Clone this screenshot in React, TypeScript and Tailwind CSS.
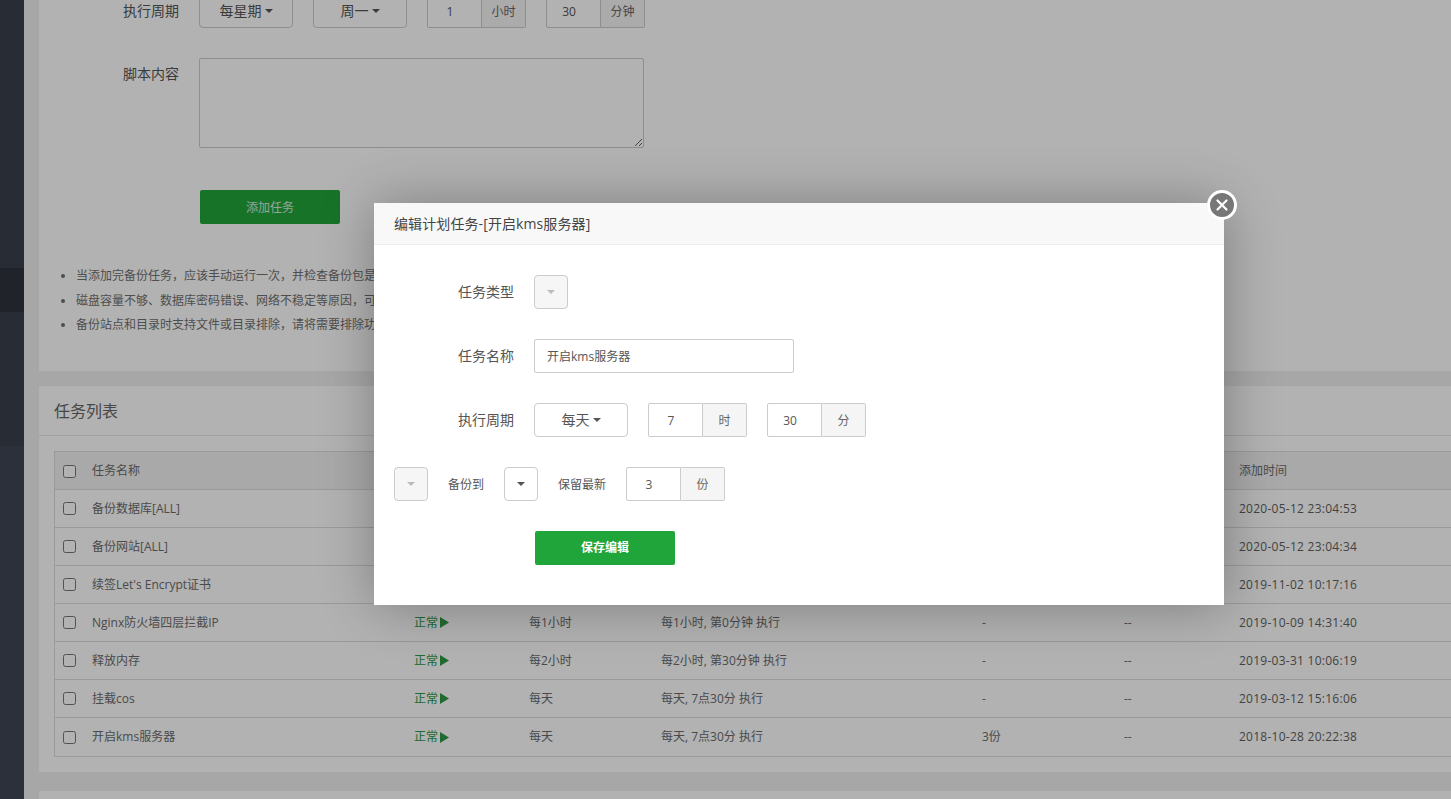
type Row = { name: string; cycle?: string; detail?: string; keep?: string; to?: string; time: string }

const rows: Row[] = [
  { name: "备份数据库[ALL]", time: "2020-05-12 23:04:53" },
  { name: "备份网站[ALL]", time: "2020-05-12 23:04:34" },
  { name: "续签Let's Encrypt证书", time: "2019-11-02 10:17:16" },
  { name: "Nginx防火墙四层拦截IP", cycle: "每1小时", detail: "每1小时, 第0分钟 执行", keep: "-", to: "--", time: "2019-10-09 14:31:40" },
  { name: "释放内存", cycle: "每2小时", detail: "每2小时, 第30分钟 执行", keep: "-", to: "--", time: "2019-03-31 10:06:19" },
  { name: "挂载cos", cycle: "每天", detail: "每天, 7点30分 执行", keep: "-", to: "--", time: "2019-03-12 15:16:06" },
  { name: "开启kms服务器", cycle: "每天", detail: "每天, 7点30分 执行", keep: "3份", to: "--", time: "2018-10-28 20:22:38" },
]

// the modal covers the rest of these lines
const tips = [
  "当添加完备份任务，应该手动运行一次，并检查备份包是",
  "磁盘容量不够、数据库密码错误、网络不稳定等原因，可",
  "备份站点和目录时支持文件或目录排除，请将需要排除功",
]

const gridCols = "grid grid-cols-[37px_322px_115px_132px_321px_142px_115px_1fr] items-center"

function Caret({ disabled }: { disabled?: boolean }) {
  return (
    <span
      className={`inline-block w-0 h-0 border-x-4 border-t-4 border-x-transparent ${
        disabled ? "border-t-[#bbbbbb]" : "border-t-[#555555]"
      }`}
    />
  )
}

function SelectButton({ label, disabled }: { label?: string; disabled?: boolean }) {
  return (
    <div
      className={`h-[34px] border border-[#cccccc] rounded-[4px] flex items-center justify-center gap-[3px] text-sm shrink-0 text-[#555555] ${
        label ? "w-[94px]" : "w-[34px]"
      } ${disabled ? "bg-[#f6f6f6]" : "bg-white"}`}
    >
      {label && <span>{label}</span>}
      <Caret disabled={disabled} />
    </div>
  )
}

function UnitInput({ value, unit }: { value: string; unit: string }) {
  return (
    <div className="flex h-[34px] w-[99px] shrink-0 text-xs text-[#555555]">
      <div className="w-[55px] bg-white border border-[#cccccc] rounded-l-[2px] flex items-center justify-center pr-[9px] pt-px">
        {value}
      </div>
      <div className="flex-1 bg-[#f5f5f5] border border-l-0 border-[#cccccc] rounded-r-[2px] flex items-center justify-center pt-px text-[#666666]">
        {unit}
      </div>
    </div>
  )
}

function Modal() {
  return (
    <div className="absolute left-[374px] top-[203px] w-[850px] bg-white shadow-[1px_1px_50px_rgba(0,0,0,0.3)]">
      <div className="h-[42px] bg-[#f8f8f8] border-b border-[#eeeeee] pl-5 flex items-center text-sm tracking-[0.1px] text-[#444444]">
        编辑计划任务-[开启kms服务器]
      </div>
      <button className="absolute -top-[13px] -right-[13px] w-[30px] h-[30px] rounded-full bg-[#777777] border-[3px] border-white flex items-center justify-center">
        <svg width="14" height="14" viewBox="0 0 14 14" fill="none" stroke="white" strokeWidth="2.2" strokeLinecap="round">
          <path d="M2.5 2.5l9 9M11.5 2.5l-9 9" />
        </svg>
      </button>
      <div className="pt-[30px] pb-10 flex flex-col gap-[30px] text-[#555555]">
        <div className="flex items-center gap-5">
          <label className="w-[140px] text-right text-sm">任务类型</label>
          <SelectButton disabled />
        </div>
        <div className="flex items-center gap-5">
          <label className="w-[140px] text-right text-sm">任务名称</label>
          <input
            className="w-[260px] h-[34px] border border-[#cccccc] rounded-[2px] pl-3 text-xs text-[#555555]"
            defaultValue="开启kms服务器"
          />
        </div>
        <div className="flex items-center gap-5">
          <label className="w-[140px] text-right text-sm">执行周期</label>
          <SelectButton label="每天" />
          <UnitInput value="7" unit="时" />
          <UnitInput value="30" unit="分" />
        </div>
        <div className="flex items-center gap-5 pl-5 text-xs">
          <SelectButton disabled />
          <span className="pt-px">备份到</span>
          <SelectButton />
          <span className="pt-px">保留最新</span>
          <UnitInput value="3" unit="份" />
        </div>
        <button className="ml-[161px] w-[140px] h-[34px] rounded-[2px] bg-[#20a53a] text-white text-xs font-bold">
          保存编辑
        </button>
      </div>
    </div>
  )
}

export default function App() {
  return (
    <div className="relative h-screen overflow-hidden flex bg-[#f0f0f0] [font-family:'Open_Sans','Noto_Sans_CJK_SC',sans-serif]">
      <aside className="w-6 shrink-0 flex flex-col bg-[#3f4553]">
        <div className="h-[268px] bg-[#393f4d]" />
        <div className="h-11 bg-[#2e333c]" />
        <div className="h-[134px] bg-[#393f4d]" />
      </aside>

      <main className="flex-1 min-w-0 pl-[15px] flex flex-col">
        <section className="bg-white h-[371px] shrink-0">
          <div className="h-7 flex items-end gap-5 text-[#555555]">
            <label className="w-[140px] h-[34px] leading-[34px] text-right text-sm">执行周期</label>
            <SelectButton label="每星期" />
            <SelectButton label="周一" />
            <UnitInput value="1" unit="小时" />
            <UnitInput value="30" unit="分钟" />
          </div>
          <div className="mt-[30px] flex gap-5 text-[#555555]">
            <label className="w-[140px] pt-[6px] text-right text-sm">脚本内容</label>
            <textarea className="w-[445px] h-[90px] border border-[#cccccc] rounded-[2px] bg-white" />
          </div>
          <button className="mt-[42px] ml-[161px] w-[140px] h-[34px] pt-px rounded-[2px] bg-[#20a53a] text-white/80 text-xs block">
            添加任务
          </button>
          <ul className="mt-10 pl-[37px] list-disc text-xs leading-[24.5px] text-[#707070] whitespace-nowrap">
            {tips.map((t) => (
              <li key={t}>{t}</li>
            ))}
          </ul>
        </section>

        <section className="mt-[15px] bg-white shrink-0 pb-[15px]">
          <div className="h-[50px] border-b border-[#e5e5e5] pl-[15px] flex items-center text-base text-[#666666]">
            任务列表
          </div>
          <div className="mt-[15px] ml-[15px] border-l border-t border-b border-[#dddddd] text-xs text-[#6b6b6b]">
            <div className={`${gridCols} h-[38px] bg-[#f2f2f2] border-b border-[#dddddd] pt-px`}>
              <input type="checkbox" className="ml-2 w-[13px] h-[13px]" />
              <span className="col-span-6">任务名称</span>
              <span>添加时间</span>
            </div>
            {rows.map((r, i) => (
              <div
                key={r.name}
                className={`${gridCols} h-[38px] ${i < rows.length - 1 ? "border-b border-[#dddddd]" : ""}`}
              >
                <input type="checkbox" className="ml-2 w-[13px] h-[13px]" />
                <span>{r.name}</span>
                {r.cycle ? (
                  <span className="flex items-center text-[#2f9a45]">
                    正常
                    <svg className="ml-[2px]" width="9" height="11" viewBox="0 0 9 11" fill="currentColor">
                      <path d="M0 0L9 5.5L0 11Z" />
                    </svg>
                  </span>
                ) : (
                  <span />
                )}
                <span>{r.cycle}</span>
                <span>{r.detail}</span>
                <span>{r.keep}</span>
                <span>{r.to}</span>
                <span className="tracking-[0.26px] text-[#5f5f5f]">{r.time}</span>
              </div>
            ))}
          </div>
        </section>

        <div className="mt-[19px] flex-1 bg-white" />
      </main>

      <div className="absolute inset-0 bg-black/30">
        <Modal />
      </div>
    </div>
  )
}
